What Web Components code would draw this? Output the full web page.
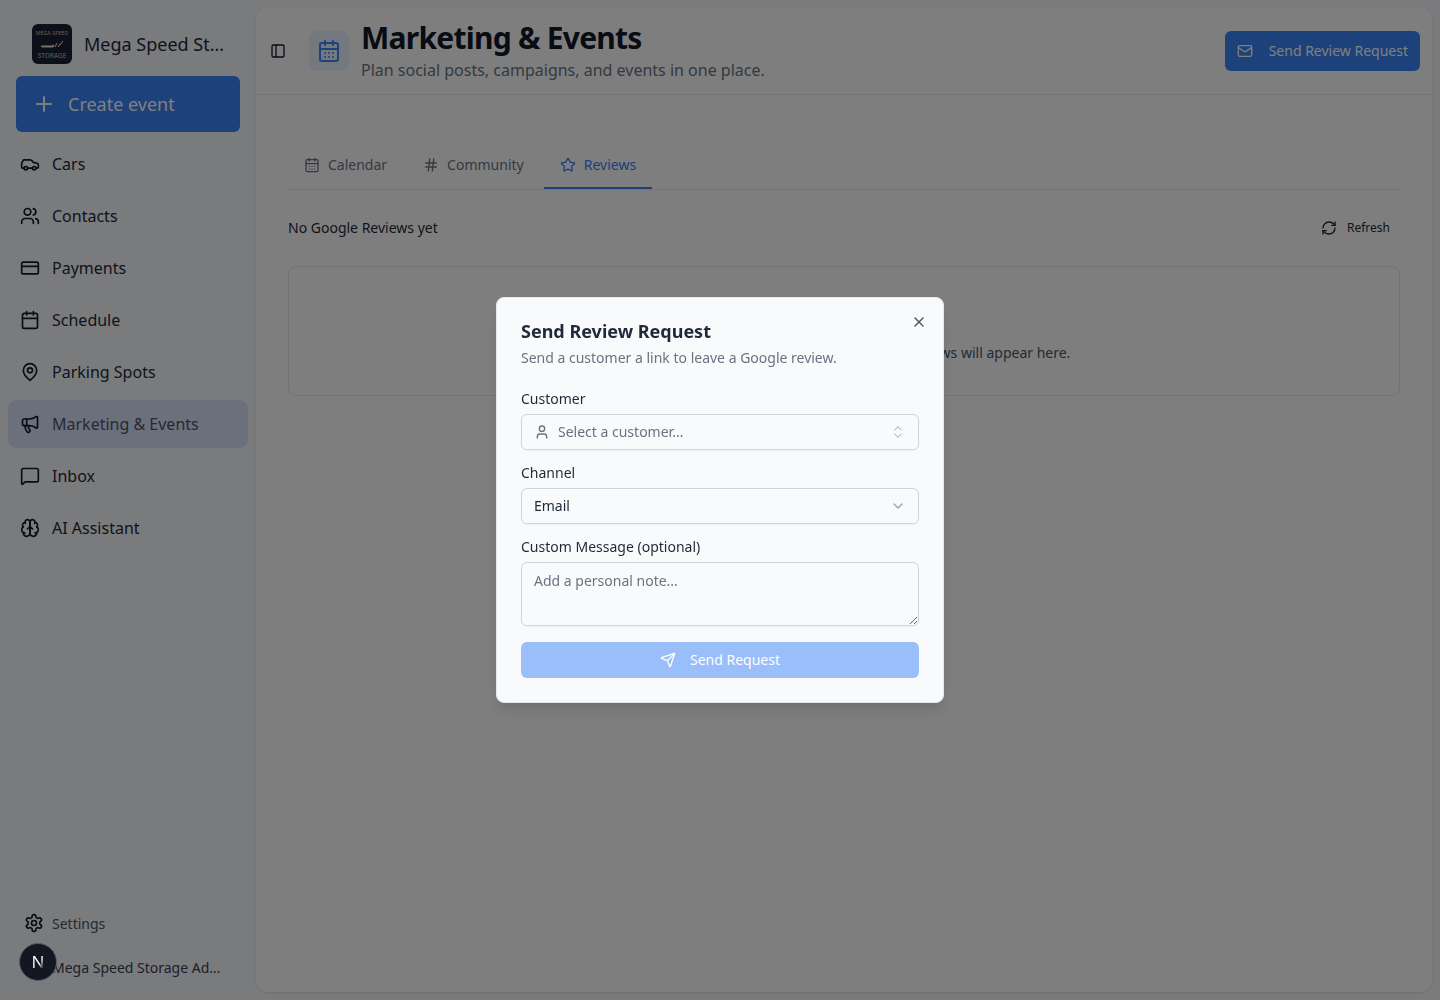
<!DOCTYPE html>
<html lang="en">
<head>
<meta charset="utf-8">
<title>Marketing & Events</title>
<style>
  html, body { margin: 0; height: 100%; }
  body {
    font-family: "Noto Sans", sans-serif;
    color: #111827;
    background: #f5f6fa;
    overflow: hidden;
  }
</style>
</head>
<body>

<app-shell>
  <app-sidebar slot="sidebar"></app-sidebar>
  <marketing-page slot="main"></marketing-page>
</app-shell>

<modal-overlay>
  <review-dialog></review-dialog>
</modal-overlay>

<dev-badge></dev-badge>

<script>
// ICON PATHS //
const ICONS = {
  car: '<path d="M19 17h2c.6 0 1-.4 1-1v-3c0-.9-.7-1.7-1.5-1.9C18.7 10.6 16 10 16 10s-1.3-1.4-2.2-2.3c-.5-.4-1.1-.7-1.8-.7H5c-.6 0-1.1.4-1.4.9l-1.4 2.9A3.7 3.7 0 0 0 2 12v4c0 .6.4 1 1 1h2"/><circle cx="7" cy="17" r="2"/><path d="M9 17h6"/><circle cx="17" cy="17" r="2"/>',
  users: '<path d="M16 21v-2a4 4 0 0 0-4-4H6a4 4 0 0 0-4 4v2"/><circle cx="9" cy="7" r="4"/><path d="M22 21v-2a4 4 0 0 0-3-3.87"/><path d="M16 3.13a4 4 0 0 1 0 7.75"/>',
  card: '<rect width="20" height="14" x="2" y="5" rx="2"/><line x1="2" x2="22" y1="10" y2="10"/>',
  calendar: '<path d="M8 2v4"/><path d="M16 2v4"/><rect width="18" height="18" x="3" y="4" rx="2"/><path d="M3 10h18"/>',
  pin: '<path d="M20 10c0 6-8 12-8 12s-8-6-8-12a8 8 0 0 1 16 0Z"/><circle cx="12" cy="10" r="3"/>',
  megaphone: '<path d="M11 6a13 13 0 0 0 8.4-2.8A1 1 0 0 1 21 4v12a1 1 0 0 1-1.6.8A13 13 0 0 0 11 14H5a2 2 0 0 1-2-2V8a2 2 0 0 1 2-2z"/><path d="M6 14a12 12 0 0 0 2.4 7.2 2 2 0 0 0 3.2-2.4A8 8 0 0 1 10 14"/><path d="M8 6v8"/>',
  message: '<path d="M22 17a2 2 0 0 1-2 2H6.828a2 2 0 0 0-1.414.586l-2.202 2.202A.71.71 0 0 1 2 21.286V5a2 2 0 0 1 2-2h16a2 2 0 0 1 2 2z"/>',
  brain: '<path d="M12 5a3 3 0 1 0-5.997.125 4 4 0 0 0-2.526 5.77 4 4 0 0 0 .556 6.588A4 4 0 1 0 12 18Z"/><path d="M12 5a3 3 0 1 1 5.997.125 4 4 0 0 1 2.526 5.77 4 4 0 0 1-.556 6.588A4 4 0 1 1 12 18Z"/><path d="M15 13a4.5 4.5 0 0 1-3-4 4.5 4.5 0 0 1-3 4"/><path d="M17.599 6.5a3 3 0 0 0 .399-1.375"/><path d="M6.003 5.125A3 3 0 0 0 6.401 6.5"/><path d="M3.477 10.896a4 4 0 0 1 .585-.396"/><path d="M19.938 10.5a4 4 0 0 1 .585.396"/><path d="M6 18a4 4 0 0 1-1.967-.516"/><path d="M19.967 17.484A4 4 0 0 1 18 18"/>',
  settings: '<path d="M12.22 2h-.44a2 2 0 0 0-2 2v.18a2 2 0 0 1-1 1.73l-.43.25a2 2 0 0 1-2 0l-.15-.08a2 2 0 0 0-2.73.73l-.22.38a2 2 0 0 0 .73 2.73l.15.1a2 2 0 0 1 1 1.72v.51a2 2 0 0 1-1 1.74l-.15.09a2 2 0 0 0-.73 2.73l.22.38a2 2 0 0 0 2.73.73l.15-.08a2 2 0 0 1 2 0l.43.25a2 2 0 0 1 1 1.73V20a2 2 0 0 0 2 2h.44a2 2 0 0 0 2-2v-.18a2 2 0 0 1 1-1.73l.43-.25a2 2 0 0 1 2 0l.15.08a2 2 0 0 0 2.73-.73l.22-.39a2 2 0 0 0-.73-2.73l-.15-.08a2 2 0 0 1-1-1.74v-.5a2 2 0 0 1 1-1.74l.15-.09a2 2 0 0 0 .73-2.73l-.22-.38a2 2 0 0 0-2.73-.73l-.15.08a2 2 0 0 1-2 0l-.43-.25a2 2 0 0 1-1-1.73V4a2 2 0 0 0-2-2z"/><circle cx="12" cy="12" r="3"/>',
  panel: '<rect width="18" height="18" x="3" y="3" rx="2"/><path d="M9 3v18"/>',
  days: '<path d="M8 2v4"/><path d="M16 2v4"/><rect width="18" height="18" x="3" y="4" rx="2"/><path d="M3 10h18"/><path d="M8 14h.01"/><path d="M12 14h.01"/><path d="M16 14h.01"/><path d="M8 18h.01"/><path d="M12 18h.01"/><path d="M16 18h.01"/>',
  hash: '<line x1="4" x2="20" y1="9" y2="9"/><line x1="4" x2="20" y1="15" y2="15"/><line x1="10" x2="8" y1="3" y2="21"/><line x1="16" x2="14" y1="3" y2="21"/>',
  star: '<path d="M11.525 2.295a.53.53 0 0 1 .95 0l2.31 4.679a2.123 2.123 0 0 0 1.595 1.16l5.166.756a.53.53 0 0 1 .294.904l-3.736 3.638a2.123 2.123 0 0 0-.611 1.878l.882 5.14a.53.53 0 0 1-.771.56l-4.618-2.428a2.122 2.122 0 0 0-1.973 0L6.396 21.01a.53.53 0 0 1-.77-.56l.881-5.139a2.122 2.122 0 0 0-.611-1.879L2.16 9.795a.53.53 0 0 1 .294-.906l5.165-.755a2.122 2.122 0 0 0 1.597-1.16z"/>',
  mail: '<rect width="20" height="16" x="2" y="4" rx="2"/><path d="m22 7-8.97 5.7a1.94 1.94 0 0 1-2.06 0L2 7"/>',
  refresh: '<path d="M3 12a9 9 0 0 1 9-9 9.75 9.75 0 0 1 6.74 2.74L21 8"/><path d="M21 3v5h-5"/><path d="M21 12a9 9 0 0 1-9 9 9.75 9.75 0 0 1-6.74-2.74L3 16"/><path d="M8 16H3v5"/>',
  user: '<path d="M19 21v-2a4 4 0 0 0-4-4H9a4 4 0 0 0-4 4v2"/><circle cx="12" cy="7" r="4"/>',
  updown: '<path d="m7 15 5 5 5-5"/><path d="m7 9 5-5 5 5"/>',
  down: '<path d="m6 9 6 6 6-6"/>',
  send: '<path d="M14.536 21.686a.5.5 0 0 0 .937-.024l6.5-19a.496.496 0 0 0-.635-.635l-19 6.5a.5.5 0 0 0-.024.937l7.93 3.18a2 2 0 0 1 1.112 1.11z"/><path d="m21.854 2.147-10.94 10.939"/>',
  x: '<path d="M18 6 6 18"/><path d="m6 6 12 12"/>',
  plus: '<path d="M5 12h14"/><path d="M12 5v14"/>'
};

class UiIcon extends HTMLElement {
  connectedCallback() {
    const size = this.getAttribute('size') || 16;
    const stroke = this.getAttribute('stroke') || 2;
    this.attachShadow({mode: 'open'}).innerHTML = `
      <style>
        :host { display: inline-flex; flex: none; width: ${ size }px; height: ${ size }px; }
        svg { display: block; }
      </style>
      <svg xmlns="http://www.w3.org/2000/svg" width="${ size }" height="${ size }" viewBox="0 0 24 24" fill="none"
        stroke="currentColor" stroke-width="${ stroke }" stroke-linecap="round" stroke-linejoin="round">${ ICONS[this.getAttribute('name')] }</svg>
    `;
  }
}

class AppShell extends HTMLElement {
  constructor() {
    super();
    this.attachShadow({mode: 'open'}).innerHTML = `
      <style>
        :host { display: flex; height: 100vh; box-sizing: border-box; }
        .side { display: flex; flex: none; width: 256px; }
        .main {
          flex: 1; min-width: 0; margin: 8px 8px 8px 0;
          background: #fcfdff; border-radius: 12px;
          box-shadow: 0 1px 3px rgba(0,0,0,.12);
        }
      </style>
      <div class="side"><slot name="sidebar"></slot></div>
      <div class="main"><slot name="main"></slot></div>
    `;
  }
}

class NavItem extends HTMLElement {
  constructor() {
    super();
    this.attachShadow({mode: 'open'}).innerHTML = `
      <style>
        :host {
          display: flex; align-items: center; gap: 12px; height: 48px;
          padding-left: 12px; border-radius: 8px; font-size: 16px; color: #1f2937;
        }
        :host([active]) { background: #d8e0fa; color: #4b5563; }
        ::slotted(ui-icon) { color: #111827; }
      </style>
      <slot name="icon"></slot><slot></slot>
    `;
  }
}

class AppSidebar extends HTMLElement {
  constructor() {
    super();
    const nav = [
      ['car', 'Cars'], ['users', 'Contacts'], ['card', 'Payments'], ['calendar', 'Schedule'],
      ['pin', 'Parking Spots'], ['megaphone', 'Marketing & Events'], ['message', 'Inbox'], ['brain', 'AI Assistant']
    ];
    const items = nav.map(([icon, label]) => `
      <nav-item ${ label.startsWith('Marketing') ? 'active' : '' }>
        <ui-icon slot="icon" name="${ icon }" size="20"></ui-icon>${ label.replace('&', '&amp;') }
      </nav-item>`).join('');

    this.attachShadow({mode: 'open'}).innerHTML = `
      <style>
        :host { display: flex; flex-direction: column; width: 100%; box-sizing: border-box; padding: 24px 0 15px; }
        .brand { display: flex; align-items: center; gap: 12px; padding: 0 32px; height: 40px; }
        .logo {
          flex: none; width: 40px; height: 40px; border-radius: 6px; background: #1b2130; color: #c9bfb2;
          display: flex; flex-direction: column; align-items: center; justify-content: space-between;
          padding: 6px 0 5px; box-sizing: border-box; overflow: hidden;
        }
        .logo span { font-size: 6.5px; line-height: 7px; white-space: nowrap; }
        .logo .top { font-size: 5.2px; letter-spacing: .1px; }
        .logo svg { display: block; }
        .name { font-size: 18px; color: #1f2937; white-space: nowrap; overflow: hidden; text-overflow: ellipsis; min-width: 0; width: 140px; }
        .create {
          display: flex; align-items: center; gap: 12px; height: 56px; margin: 12px 16px 8px; padding-left: 16px;
          border-radius: 6px; background: #3b82f6; color: #fff; font-size: 18px;
        }
        nav { display: flex; flex-direction: column; gap: 4px; padding: 0 8px; }
        .foot { margin-top: auto; }
        .row { display: flex; align-items: center; height: 36px; font-size: 14px; color: #374151; }
        .settings { gap: 8px; padding-left: 24px; color: #4b5563; }
        .settings ui-icon { color: #111827; }
        .account { margin-top: 8px; padding-left: 52px; }
        .account span { width: 170px; white-space: nowrap; overflow: hidden; text-overflow: ellipsis; }
      </style>
      <div class="brand">
        <div class="logo">
          <span class="top">MEGA SPEED</span>
          <svg width="26" height="9" viewBox="0 0 26 9" fill="none" stroke="#e8e2d6" stroke-width="1">
            <path d="M2 6h11l2-1-1 2H3z" fill="#e8e2d6"/><path d="M16 7l2-4M19 7l2-3M21 5l3-4"/>
          </svg>
          <span>STORAGE</span>
        </div>
        <div class="name">Mega Speed Storage</div>
      </div>
      <div class="create"><ui-icon name="plus" size="24"></ui-icon>Create event</div>
      <nav>${ items }</nav>
      <div class="foot">
        <div class="row settings"><ui-icon name="settings" size="20"></ui-icon>Settings</div>
        <div class="row account"><span>Mega Speed Storage Admin</span></div>
      </div>
    `;
  }
}

class TabItem extends HTMLElement {
  constructor() {
    super();
    this.attachShadow({mode: 'open'}).innerHTML = `
      <style>
        :host {
          display: flex; align-items: center; gap: 8px; height: 48px; box-sizing: border-box; padding: 2px 16px 0;
          font-size: 14px; line-height: 20px; color: #6b7280; border-bottom: 2px solid transparent;
        }
        :host([active]) { color: #3b82f6; border-bottom-color: #3b82f6; }
      </style>
      <slot></slot>
    `;
  }
}

class PageHeader extends HTMLElement {
  constructor() {
    super();
    this.attachShadow({mode: 'open'}).innerHTML = `
      <style>
        :host {
          display: flex; align-items: center; box-sizing: border-box; height: 87px; padding: 0 12px 0 14px;
          border-bottom: 1px solid #e5e7eb;
        }
        .toggle { color: #111827; margin-right: 23px; display: flex; }
        .tile {
          flex: none; width: 40px; height: 40px; border-radius: 8px; margin-right: 12px; color: #3b82f6;
          background: rgba(59,130,246,.1); display: flex; align-items: center; justify-content: center;
        }
        .text { flex: 1; min-width: 0; }
        h1 { margin: 0 0 2px; font-size: 30px; line-height: 36px; font-weight: 700; letter-spacing: -.75px; color: #111827; }
        p { margin: 0; font-size: 16px; line-height: 24px; color: #6b7280; }
        .send {
          display: flex; align-items: center; gap: 16px; height: 40px; padding: 0 12px; border-radius: 6px;
          background: #3b82f6; color: #fff; font-size: 14px; line-height: 20px; padding-bottom: 1px; box-sizing: border-box;
        }
      </style>
      <div class="toggle"><ui-icon name="panel" size="16"></ui-icon></div>
      <div class="tile"><ui-icon name="days" size="24"></ui-icon></div>
      <div class="text">
        <h1>Marketing &amp; Events</h1>
        <p>Plan social posts, campaigns, and events in one place.</p>
      </div>
      <div class="send"><ui-icon name="mail" size="16"></ui-icon>Send Review Request</div>
    `;
  }
}

class MarketingPage extends HTMLElement {
  constructor() {
    super();
    this.attachShadow({mode: 'open'}).innerHTML = `
      <style>
        :host { display: block; }
        .body { padding: 46px 32px 0; }
        .tabs { display: flex; gap: 4px; border-bottom: 1px solid #e5e7eb; }
        .bar { display: flex; align-items: center; justify-content: space-between; height: 36px; margin: 20px 0; }
        .bar .title { font-size: 14px; line-height: 20px; color: #1f2937; }
        .refresh { display: flex; align-items: center; gap: 10px; padding-right: 10px; font-size: 12px; line-height: 16px; color: #1f2937; }
        .empty {
          display: flex; flex-direction: column; align-items: center; box-sizing: border-box; height: 130px;
          padding-top: 32px; border: 1px solid #e5e7eb; border-radius: 8px; color: #4b5563; font-size: 14px;
        }
        .empty p { margin: 12px 0 0 12px; line-height: 20px; }
      </style>
      <page-header></page-header>
      <div class="body">
        <div class="tabs">
          <tab-item><ui-icon name="days"></ui-icon>Calendar</tab-item>
          <tab-item><ui-icon name="hash"></ui-icon>Community</tab-item>
          <tab-item active><ui-icon name="star"></ui-icon>Reviews</tab-item>
        </div>
        <div class="bar">
          <div class="title">No Google Reviews yet</div>
          <div class="refresh"><ui-icon name="refresh"></ui-icon>Refresh</div>
        </div>
        <div class="empty">
          <ui-icon name="star" size="32"></ui-icon>
          <p>Send a review request to get started. Your reviews will appear here.</p>
        </div>
      </div>
    `;
  }
}

class ModalOverlay extends HTMLElement {
  constructor() {
    super();
    this.attachShadow({mode: 'open'}).innerHTML = `
      <style>
        :host {
          position: fixed; inset: 0; z-index: 50; background: rgba(0,0,0,.5);
          display: flex; align-items: center; justify-content: center;
        }
      </style>
      <slot></slot>
    `;
  }
}

class FormField extends HTMLElement {
  constructor() {
    super();
    this.attachShadow({mode: 'open'}).innerHTML = `
      <style>
        :host { display: flex; flex-direction: column; gap: 6px; }
        label { font-size: 14px; line-height: 19px; font-weight: 400; color: #1f2937; }
        .in {
          display: flex; align-items: center; box-sizing: border-box; height: 36px; padding: 0 12px;
          border: 1px solid #d1d5db; border-radius: 6px; font-size: 14px; line-height: 20px; color: #1f2937;
          box-shadow: 0 1px 2px rgba(0,0,0,.05);
        }
        :host([area]) .in {
          display: block; height: 64px; padding-top: 8px; color: #6b7280;
          resize: vertical; overflow: auto;
        }
        :host([muted]) .in { color: #6b7280; }
        .in ::slotted(ui-icon) { margin-left: auto; color: #9ca3af; }
        .in ::slotted(ui-icon[slot="lead"]) { margin: 0 8px 0 0; color: #6b7280; }
      </style>
      <label>${ this.getAttribute('label') }</label>
      <div class="in"><slot name="lead"></slot><slot></slot><slot name="trail"></slot></div>
    `;
  }
}

class ReviewDialog extends HTMLElement {
  constructor() {
    super();
    this.attachShadow({mode: 'open'}).innerHTML = `
      <style>
        :host {
          display: block; position: relative; box-sizing: border-box; width: 448px; height: 406px; padding: 24px;
          background: #f9fafc; border: 1px solid #e5e7eb; border-radius: 8px;
          box-shadow: 0 10px 15px -3px rgba(0,0,0,.1), 0 4px 6px -4px rgba(0,0,0,.1);
        }
        .close { position: absolute; top: 16px; right: 16px; color: #4b5563; display: flex; }
        h2 { margin: 0; font-size: 18px; line-height: 18px; font-weight: 700; color: #1f2937; }
        .desc { margin: 8px 0 0; font-size: 14px; line-height: 20px; color: #6b7280; }
        .fields { display: flex; flex-direction: column; gap: 13px; margin-top: 21px; }
        .submit {
          display: flex; align-items: center; justify-content: center; gap: 14px; height: 36px; margin-top: 16px;
          border-radius: 6px; background: #3b82f6; opacity: .5; color: #fff; font-size: 14px; line-height: 20px;
        }
      </style>
      <div class="close"><ui-icon name="x" size="16"></ui-icon></div>
      <h2>Send Review Request</h2>
      <p class="desc">Send a customer a link to leave a Google review.</p>
      <div class="fields">
        <form-field label="Customer" muted>
          <ui-icon slot="lead" name="user" size="16"></ui-icon>Select a customer...
          <ui-icon slot="trail" name="updown" size="16" stroke="1.5"></ui-icon>
        </form-field>
        <form-field label="Channel">Email<ui-icon slot="trail" name="down" size="16"></ui-icon></form-field>
        <form-field label="Custom Message (optional)" area>Add a personal note...</form-field>
      </div>
      <div class="submit"><ui-icon name="send" size="16"></ui-icon>Send Request</div>
    `;
  }
}

class DevBadge extends HTMLElement {
  constructor() {
    super();
    this.attachShadow({mode: 'open'}).innerHTML = `
      <style>
        :host {
          position: fixed; left: 19px; top: 943px; z-index: 60; box-sizing: border-box; width: 38px; height: 38px;
          border-radius: 50%; background: #141722; border: 1px solid #555866;
          display: flex; align-items: center; justify-content: center; padding-bottom: 2px;
        }
        span {
          font-size: 17px; font-weight: 400; color: transparent;
          background: linear-gradient(125deg, #fff 60%, rgba(255,255,255,.25) 78%);
          -webkit-background-clip: text; background-clip: text;
        }
      </style>
      <span>N</span>
    `;
  }
}

customElements.define('ui-icon', UiIcon);
customElements.define('app-shell', AppShell);
customElements.define('nav-item', NavItem);
customElements.define('app-sidebar', AppSidebar);
customElements.define('tab-item', TabItem);
customElements.define('page-header', PageHeader);
customElements.define('marketing-page', MarketingPage);
customElements.define('modal-overlay', ModalOverlay);
customElements.define('form-field', FormField);
customElements.define('review-dialog', ReviewDialog);
customElements.define('dev-badge', DevBadge);
</script>
</body>
</html>
